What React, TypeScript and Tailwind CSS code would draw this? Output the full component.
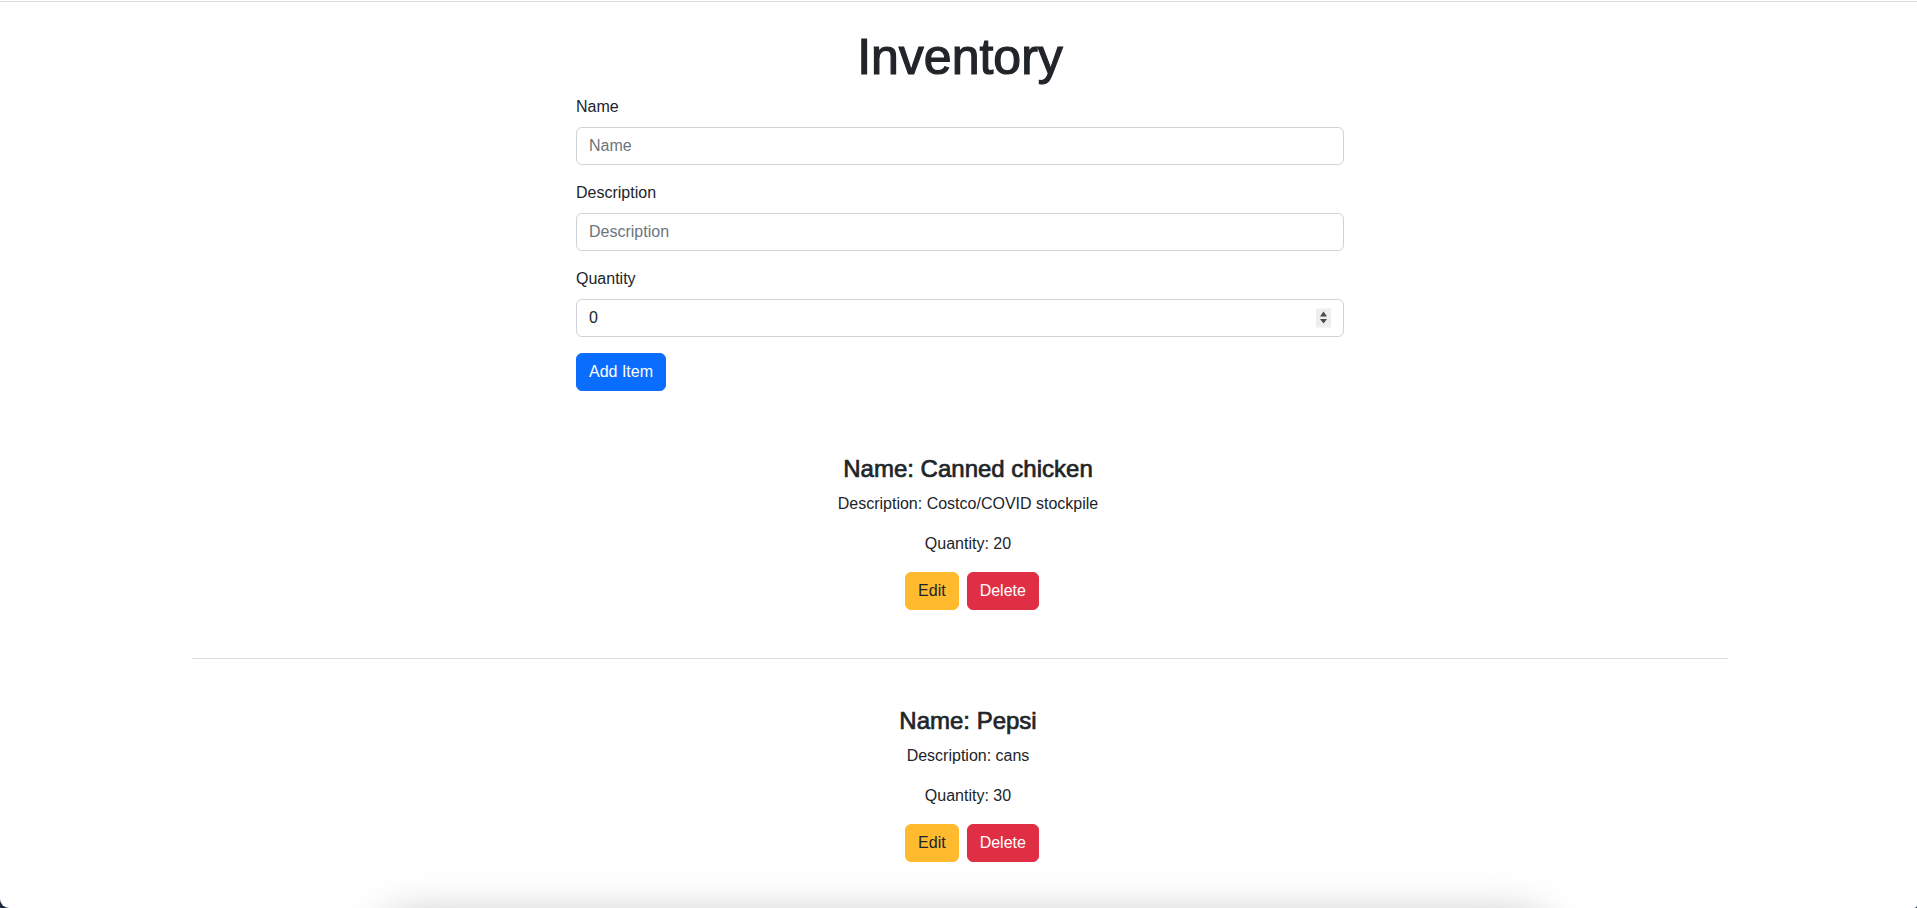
import React from "react";

type Item = { name: string; description: string; quantity: number };

const items: Item[] = [
  { name: "Canned chicken", description: "Costco/COVID stockpile", quantity: 20 },
  { name: "Pepsi", description: "cans", quantity: 30 },
];

function Field({ label, placeholder }: { label: string; placeholder: string }) {
  return (
    <div className="mb-4">
      <label className="mb-2 block leading-6">{label}</label>
      <input
        placeholder={placeholder}
        className="block h-[38px] w-full rounded-[6px] border border-[#ced4da] bg-white px-3 text-base text-[#212529] outline-none placeholder:text-[#6c757d]"
      />
    </div>
  );
}

function ItemCard({ item }: { item: Item }) {
  return (
    <div className="py-8 pl-4 text-center">
      <h4 className="mb-2 text-[24px] leading-[28.8px] font-medium [-webkit-text-stroke:0.7px_#212529]">
        Name: {item.name}
      </h4>
      <p className="mb-4 leading-6">Description: {item.description}</p>
      <p className="mb-4 leading-6">Quantity: {item.quantity}</p>
      <div className="flex justify-center">
        <button className="ml-2 h-[38px] rounded-[6px] border border-[#ffba2e] bg-[#ffba2e] px-3 text-base text-[#212529]">
          Edit
        </button>
        <button className="ml-2 h-[38px] rounded-[6px] border border-[#e02f44] bg-[#e02f44] px-3 text-base text-white">
          Delete
        </button>
      </div>
    </div>
  );
}

export default function App() {
  return (
    <div className="relative h-[908px] w-full overflow-hidden bg-[#1c2742] font-['Liberation_Sans',Arial,sans-serif] text-base text-[#212529]">
      <div className="h-full w-full rounded-br-[3px] rounded-bl-[9px] bg-white">
        <div className="h-px" />
        <div className="h-px bg-[#dadada]" />
        <div className="pl-[3px]">
          <div className="mx-auto w-[1536px]">
            <h1 className="mt-[25px] mb-2 text-center text-[50px] leading-[60px] font-medium [-webkit-text-stroke:1.2px_#212529]">
              Inventory
            </h1>
            <form className="mx-auto w-[768px]" onSubmit={(e) => e.preventDefault()}>
              <Field label="Name" placeholder="Name" />
              <Field label="Description" placeholder="Description" />
              <div className="mb-4">
                <label className="mb-2 block leading-6">Quantity</label>
                <div className="relative">
                  <input
                    type="text"
                    defaultValue="0"
                    className="block h-[38px] w-full rounded-[6px] border border-[#ced4da] bg-white px-3 text-base text-[#212529] outline-none"
                  />
                  <div className="absolute top-1/2 right-[13px] h-[19px] w-[15px] -translate-y-1/2 bg-[#eeeeee]">
                    <svg width="15" height="19" viewBox="0 0 15 19">
                      <path d="M4 8 L7.5 3 L11 8 Z" fill="#4a4a4a" />
                      <path d="M4 10.5 L11 10.5 L7.5 15 Z" fill="#4a4a4a" />
                    </svg>
                  </div>
                </div>
              </div>
              <button
                type="submit"
                className="h-[38px] rounded-[6px] border border-[#0b6dfd] bg-[#0b6dfd] px-3 text-base text-white"
              >
                Add Item
              </button>
            </form>
            <div className="mt-8">
              {items.map((item, i) => (
                <div key={item.name}>
                  {i > 0 && <hr className="my-4 border-0 border-t border-[#dedede]" />}
                  <ItemCard item={item} />
                </div>
              ))}
            </div>
          </div>
        </div>
      </div>
      <div className="pointer-events-none absolute top-[918px] left-[380px] h-[60px] w-[1170px] rounded-[30px] bg-[#b8b8b8] blur-[22px]" />
    </div>
  );
}
